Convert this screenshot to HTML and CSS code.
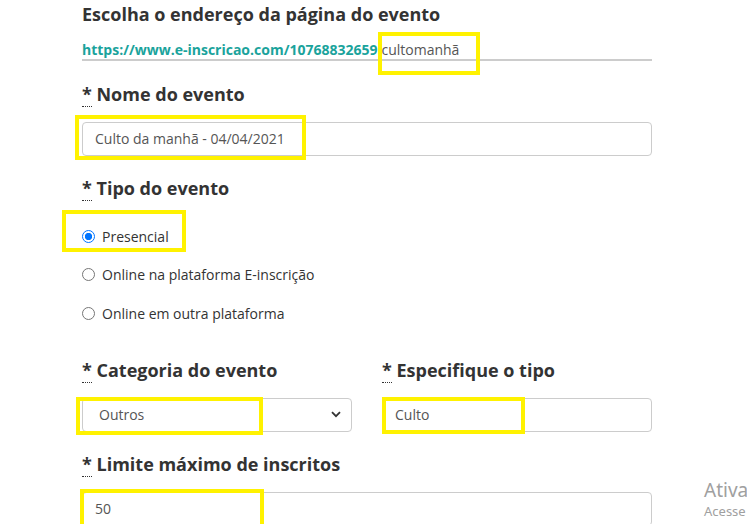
FILE: index.html
```html
<!DOCTYPE html>
<html lang="pt-BR">
<head>
<meta charset="utf-8">
<link rel="stylesheet" href="styles.css">
</head>
<body>
<div class="page">
  <form class="form">
    <section class="field field-url">
      <h2 class="heading">Escolha o endereço da página do evento</h2>
      <div class="url-row">
        <span class="url-base">https://www.e-inscricao.com/10768832659.</span><span class="url-slug">cultomanhã</span>
        <span class="hl hl-slug"></span>
      </div>
    </section>

    <section class="field field-name">
      <label class="label"><abbr class="req">*</abbr> Nome do evento</label>
      <div class="control-wrap">
        <div class="input">Culto da manhã - 04/04/2021</div>
        <span class="hl hl-name"></span>
      </div>
    </section>

    <section class="field field-kind">
      <label class="label"><abbr class="req">*</abbr> Tipo do evento</label>
      <div class="radios">
        <div class="radio-row">
          <span class="radio checked"></span><span class="radio-label">Presencial</span>
          <span class="hl hl-radio"></span>
        </div>
        <div class="radio-row">
          <span class="radio"></span><span class="radio-label">Online na plataforma E-inscrição</span>
        </div>
        <div class="radio-row">
          <span class="radio"></span><span class="radio-label">Online em outra plataforma</span>
        </div>
      </div>
    </section>

    <section class="field two-col">
      <div class="col">
        <label class="label"><abbr class="req">*</abbr> Categoria do evento</label>
        <div class="control-wrap">
          <div class="input select">
            <span>Outros</span>
            <svg class="chev" width="10" height="7" viewBox="0 0 10 7"><path d="M1 1.2 L5 5.2 L9 1.2" fill="none" stroke="#333" stroke-width="1.8"/></svg>
          </div>
          <span class="hl hl-cat"></span>
        </div>
      </div>
      <div class="col">
        <label class="label"><abbr class="req">*</abbr> Especifique o tipo</label>
        <div class="control-wrap">
          <div class="input">Culto</div>
          <span class="hl hl-type"></span>
        </div>
      </div>
    </section>

    <section class="field field-limit">
      <label class="label"><abbr class="req">*</abbr> Limite máximo de inscritos</label>
      <div class="control-wrap">
        <div class="input">50</div>
        <span class="hl hl-limit"></span>
      </div>
    </section>
  </form>
  <div class="watermark">
    <div class="wm-title">Ativa</div>
    <div class="wm-sub">Acesse</div>
  </div>
</div>
</body>
</html>
```

FILE: styles.css
```css
html, body {
  margin: 0;
  padding: 0;
  background: #fff;
  overflow: hidden;
}
body {
  font-family: "Open Sans", "Noto Sans", sans-serif;
  color: #333;
  width: 747px;
  height: 524px;
}
.page {
  position: relative;
  width: 747px;
  height: 524px;
  overflow: hidden;
}
.form {
  padding-left: 82px;
  width: 570px;
}
.heading {
  margin: 0;
  padding-top: 2px;
  font-size: 18px;
  font-weight: 700;
  line-height: 24px;
  color: #333;
}
.url-row {
  position: relative;
  margin-top: 15px;
  border-bottom: 2px solid #ccc;
  font-size: 14px;
  line-height: 18px;
  white-space: nowrap;
}
.url-base {
  color: #1aa39c;
  font-weight: 700;
}
.url-slug {
  color: #555;
}
.label {
  display: block;
  font-size: 18px;
  font-weight: 700;
  line-height: 24px;
  color: #333;
}
.req {
  text-decoration: none;
  border-bottom: 1px dotted #333;
  cursor: help;
}
.control-wrap {
  position: relative;
  margin-top: 16px;
}
.input {
  box-sizing: border-box;
  height: 34px;
  border: 1px solid #ccc;
  border-radius: 4px;
  padding: 0 12px;
  font-size: 14px;
  line-height: 32px;
  color: #555;
  background: #fff;
}
.field-name { margin-top: 21px; }
.field-name .control-wrap { margin-top: 16px; }

.field-kind { margin-top: 20px; }
.radios {
  display: flex;
  flex-direction: column;
  margin-top: 17px;
}
.radio-row {
  position: relative;
  display: flex;
  align-items: center;
  height: 38.5px;
  gap: 7px;
  font-size: 14px;
  color: #333;
}
.radio {
  box-sizing: border-box;
  width: 13px;
  height: 13px;
  border-radius: 50%;
  border: 1px solid #767676;
  background: #fff;
}
.radio.checked {
  border: 1.5px solid #0075ff;
  background: radial-gradient(circle, #0075ff 0 3.4px, #fff 3.9px);
}

.two-col {
  display: flex;
  gap: 30px;
  margin-top: 25px;
}
.col {
  flex: 0 0 270px;
}
.select {
  display: flex;
  align-items: center;
  justify-content: space-between;
  padding-left: 16px;
  padding-right: 10px;
}
.chev { display: block; }

.field-limit { margin-top: 20px; }

/* yellow highlight annotations */
.hl {
  position: absolute;
  box-sizing: border-box;
  border: 4px solid #fff200;
  pointer-events: none;
}
.hl-slug { left: 296px; top: -9px; width: 102px; height: 43px; }
.hl-name { left: -7px; top: -7px; width: 231px; height: 45px; }
.hl-radio { left: -20px; top: -7px; width: 124px; height: 42px; }
.hl-cat { left: -6px; top: -1px; width: 187px; height: 38px; }
.hl-type { left: 0; top: -1px; width: 143px; height: 37px; }
.hl-limit { left: -2px; top: -3px; width: 184px; height: 40px; }

.watermark {
  position: absolute;
  left: 704px;
  top: 478px;
  color: #a0a0a0;
  white-space: nowrap;
  font-family: "Noto Sans", "Open Sans", sans-serif;
}
.wm-title { font-size: 19px; line-height: 24px; }
.wm-sub { font-size: 13px; line-height: 18px; }
```
